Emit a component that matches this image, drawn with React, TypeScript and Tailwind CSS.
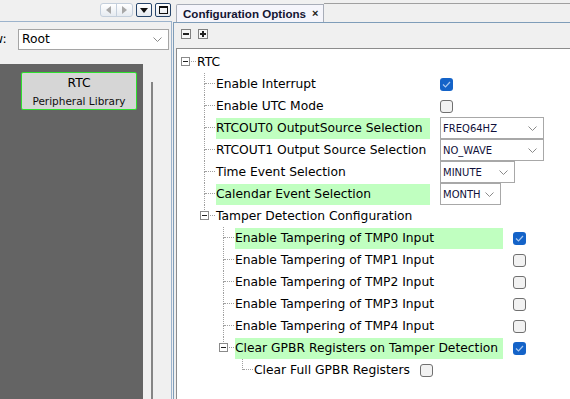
import React from 'react'

type Ctrl = { type: 'check'; on: boolean } | { type: 'select'; value: string; w: string }

type Row = {
  level: number
  label: string
  box?: boolean
  hl?: boolean
  lw?: string
  ctrl?: Ctrl
}

const ROWS: Row[] = [
  { level: 0, label: 'RTC', box: true },
  { level: 1, label: 'Enable Interrupt', lw: 'w-[214px]', ctrl: { type: 'check', on: true } },
  { level: 1, label: 'Enable UTC Mode', lw: 'w-[214px]', ctrl: { type: 'check', on: false } },
  { level: 1, label: 'RTCOUT0 OutputSource Selection', lw: 'w-[214px]', hl: true, ctrl: { type: 'select', value: 'FREQ64HZ', w: 'w-[104px]' } },
  { level: 1, label: 'RTCOUT1 Output Source Selection', lw: 'w-[214px]', ctrl: { type: 'select', value: 'NO_WAVE', w: 'w-[104px]' } },
  { level: 1, label: 'Time Event Selection', lw: 'w-[214px]', ctrl: { type: 'select', value: 'MINUTE', w: 'w-[75px]' } },
  { level: 1, label: 'Calendar Event Selection', lw: 'w-[214px]', hl: true, ctrl: { type: 'select', value: 'MONTH', w: 'w-[61px]' } },
  { level: 1, label: 'Tamper Detection Configuration', box: true },
  { level: 2, label: 'Enable Tampering of TMP0 Input', lw: 'w-[268px]', hl: true, ctrl: { type: 'check', on: true } },
  { level: 2, label: 'Enable Tampering of TMP1 Input', lw: 'w-[268px]', ctrl: { type: 'check', on: false } },
  { level: 2, label: 'Enable Tampering of TMP2 Input', lw: 'w-[268px]', ctrl: { type: 'check', on: false } },
  { level: 2, label: 'Enable Tampering of TMP3 Input', lw: 'w-[268px]', ctrl: { type: 'check', on: false } },
  { level: 2, label: 'Enable Tampering of TMP4 Input', lw: 'w-[268px]', ctrl: { type: 'check', on: false } },
  { level: 2, label: 'Clear GPBR Registers on Tamper Detection', box: true, lw: 'w-[268px]', hl: true, ctrl: { type: 'check', on: true } },
  { level: 3, label: 'Clear Full GPBR Registers', ctrl: { type: 'check', on: false } },
]

// does a row at this level follow index i before the tree climbs above it
function hasMoreAt(i: number, level: number): boolean {
  for (let j = i + 1; j < ROWS.length; j++) {
    if (ROWS[j].level < level) return false
    if (ROWS[j].level === level) return true
  }
  return false
}

function Chevron() {
  return (
    <svg width="9" height="5" viewBox="0 0 9 5" className="flex-none">
      <polyline points="0.5,0.5 4.5,4.5 8.5,0.5" fill="none" stroke="#8a8a8a" strokeWidth="1" />
    </svg>
  )
}

function Checkbox({ on }: { on: boolean }) {
  if (on) {
    return (
      <div className="w-[13px] h-[13px] rounded-[3px] bg-[#1463c8] flex items-center justify-center flex-none">
        <svg width="9" height="7" viewBox="0 0 9 7">
          <polyline points="1,3.5 3.5,6 8,1" fill="none" stroke="#a9c8f0" strokeWidth="1.2" />
        </svg>
      </div>
    )
  }
  return <div className="w-[13px] h-[13px] rounded-[3px] bg-[#f2f2f2] border border-[#707070] flex-none" />
}

function Select({ value, w }: { value: string; w: string }) {
  return (
    <div className={`${w} h-[22px] border border-[#a8a8a8] bg-white flex items-center justify-between pl-[2px] pr-[6px] flex-none`}>
      <span className="text-[10px] text-[#10103a] font-['DejaVu_Sans',sans-serif]">{value}</span>
      <Chevron />
    </div>
  )
}

function ExpandBox() {
  return (
    <div className="absolute left-[4px] top-[6px] w-[9px] h-[9px] border border-[#8a8a8a] bg-white flex items-center justify-center">
      <div className="w-[5px] h-px bg-[#202020]" />
    </div>
  )
}

function TreeRow({ row, i }: { row: Row; i: number }) {
  const cells = []
  for (let c = 0; c < row.level; c++) {
    cells.push(
      <div key={c} className="w-[19px] h-[22px] relative flex-none">
        {hasMoreAt(i, c) && <div className="absolute left-[8px] top-0 bottom-0 border-l border-dotted border-[#a0a0a0]" />}
      </div>
    )
  }
  const more = row.level > 0 && hasMoreAt(i, row.level)
  cells.push(
    <div key="own" className="w-[19px] h-[22px] relative flex-none">
      {row.level > 0 && <div className="absolute left-[8px] top-0 h-[11px] border-l border-dotted border-[#a0a0a0]" />}
      {more && <div className="absolute left-[8px] top-[11px] bottom-0 border-l border-dotted border-[#a0a0a0]" />}
      <div className="absolute left-[9px] top-[10px] w-[10px] border-t border-dotted border-[#a0a0a0]" />
      {row.box && <ExpandBox />}
    </div>
  )

  return (
    <div className="h-[22px] flex items-center">
      {cells}
      <div
        className={`${row.lw ?? ''} ${row.hl ? 'bg-[#c0ffc0]' : ''} h-[21px] ml-[1px] flex items-center whitespace-nowrap text-[12.3px] text-black flex-none`}
      >
        {row.label}
      </div>
      {row.ctrl && (
        <div className="ml-[10px] flex items-center">
          {row.ctrl.type === 'check' ? <Checkbox on={row.ctrl.on} /> : <Select value={row.ctrl.value} w={row.ctrl.w} />}
        </div>
      )}
    </div>
  )
}

function LeftPanel() {
  return (
    <div className="w-[172px] flex flex-col flex-none">
      {/* tab strip buttons */}
      <div className="h-[21px] flex items-start justify-end gap-[3px] pt-[3px] pr-[1px]">
        <div className="w-[33px] h-[14px] rounded-[3px] border border-[#c4cfdc] bg-gradient-to-b from-white to-[#e6ebf1] flex">
          <div className="flex-1 flex items-center justify-center border-r border-[#c4cfdc]">
            <svg width="5" height="8" viewBox="0 0 5 8"><polygon points="5,0 0,4 5,8" fill="#a8a8a8" /></svg>
          </div>
          <div className="flex-1 flex items-center justify-center">
            <svg width="5" height="8" viewBox="0 0 5 8"><polygon points="0,0 5,4 0,8" fill="#a8a8a8" /></svg>
          </div>
        </div>
        <div className="w-[16px] h-[14px] rounded-[2px] border border-[#26446a] bg-gradient-to-b from-white to-[#e4e9ef] flex items-center justify-center">
          <svg width="8" height="5" viewBox="0 0 8 5"><polygon points="0,0 8,0 4,5" fill="#101010" /></svg>
        </div>
        <div className="w-[16px] h-[14px] rounded-[2px] border border-[#26446a] bg-gradient-to-b from-white to-[#e4e9ef] flex items-center justify-center">
          <div className="w-[9px] h-[8px] border border-[#101010] border-t-2" />
        </div>
      </div>
      <div className="flex-1 flex flex-col border-t border-r border-[#9cb3cc] bg-[#f0f0f0] overflow-hidden">
        <div className="h-[28px] flex items-center pt-[6px]">
          <span className="-ml-[26px] w-[44px] text-[12.3px] text-black">View:</span>
          <div className="w-[151px] h-[21px] border border-[#a5a5a5] bg-white flex items-center justify-between pl-[3px] pr-[6px]">
            <span className="text-[12.3px] text-black">Root</span>
            <Chevron />
          </div>
        </div>
        <div className="flex-1 flex mt-[14px]">
          <div className="w-[143px] bg-[#646464] pt-[8px] pl-[21px]">
            <div className="w-[116px] h-[38px] rounded-[2px] border-[1.5px] border-[#2ee02e] bg-[#d6d6d6] flex flex-col items-center">
              <span className="text-[12.3px] text-black leading-[15px] mt-[3px]">RTC</span>
              <span className="text-[10.5px] text-[#101010] leading-[14px] mt-[3px]">Peripheral Library</span>
            </div>
          </div>
          <div className="flex-1 pl-[8px] pt-[18px]">
            <div className="w-[2px] h-full bg-[#858585]" />
          </div>
        </div>
      </div>
    </div>
  )
}

function RightPanel() {
  return (
    <div className="flex-1 flex flex-col ml-[1px]">
      <div className="h-[22px] flex items-end">
        <div className="ml-[3px] w-[148px] h-[18px] border border-b-0 border-[#a8adb8] rounded-tl-[2px] bg-[#f5f5fb] flex items-center pl-[6px]">
          <span className="font-['Liberation_Sans',sans-serif] font-bold text-[11.6px] text-[#141432]">Configuration Options</span>
          <span className="ml-[6px] font-['Liberation_Sans',sans-serif] font-bold text-[11px] text-[#202020]">×</span>
        </div>
        <div className="flex-1 self-start mt-[3px] border-t border-[#a0a0a0]" />
      </div>
      <div className="flex-1 flex flex-col border-t border-l border-[#7f9db9] bg-[#f0f0f0]">
        <div className="h-[25px] flex items-start gap-[7px] pl-[7px] pt-[6px]">
          <div className="w-[10px] h-[10px] border border-[#808080] bg-[#f6f6f6] flex items-center justify-center">
            <div className="w-[6px] h-[2px] bg-[#202020]" />
          </div>
          <div className="w-[10px] h-[10px] border border-[#808080] bg-[#f6f6f6] flex items-center justify-center relative">
            <div className="w-[6px] h-[2px] bg-[#202020]" />
            <div className="absolute w-[2px] h-[6px] bg-[#202020]" />
          </div>
        </div>
        <div className="flex-1 ml-[2px] border-t border-l border-[#8c8c8c] bg-white pt-[2px] overflow-hidden">
          {ROWS.map((row, i) => (
            <TreeRow key={i} row={row} i={i} />
          ))}
        </div>
      </div>
    </div>
  )
}

export default function App() {
  return (
    <div className="w-[570px] h-[399px] flex bg-[#f0f0f0] overflow-hidden font-['DejaVu_Sans',sans-serif]">
      <LeftPanel />
      <RightPanel />
    </div>
  )
}
